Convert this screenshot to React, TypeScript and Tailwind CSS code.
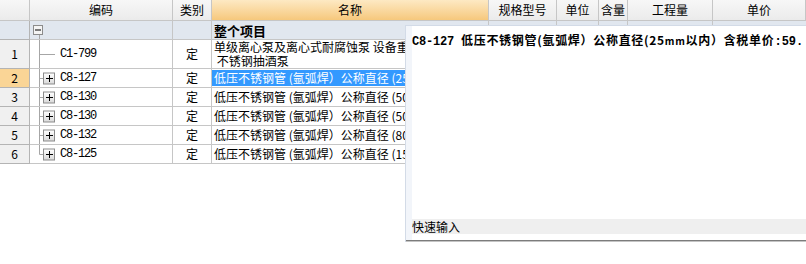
import React from 'react';

const COLS = 'grid grid-cols-[30px_143px_39px_277px_68px_42px_29px_85px_93px]';
const CJK = "font-['Noto_Sans_CJK_SC','Noto_Sans',sans-serif]";
const MONO = "font-['Liberation_Mono',monospace]";

type Row = {
  n: string;
  code: string;
  name: string[];
  h: number;
  leaf?: boolean;
  selected?: boolean;
  last?: boolean;
};

const rows: Row[] = [
  { n: '1', code: 'C1-799', name: ['单级离心泵及离心式耐腐蚀泵 设备重量(t以内) 0.5', ' 不锈钢抽酒泵'], h: 29, leaf: true },
  { n: '2', code: 'C8-127', name: ['低压不锈钢管 (氩弧焊）公称直径 (25mm以内）'], h: 19, selected: true },
  { n: '3', code: 'C8-130', name: ['低压不锈钢管 (氩弧焊）公称直径 (50mm以内）'], h: 19 },
  { n: '4', code: 'C8-130', name: ['低压不锈钢管 (氩弧焊）公称直径 (50mm以内）'], h: 19 },
  { n: '5', code: 'C8-132', name: ['低压不锈钢管 (氩弧焊）公称直径 (80mm以内）'], h: 19 },
  { n: '6', code: 'C8-125', name: ['低压不锈钢管 (氩弧焊）公称直径 (15mm以内）'], h: 19, last: true },
];

const headers = ['', '编码', '类别', '名称', '规格型号', '单位', '含量', '工程量', '单价'];

const TreeGlyph = ({ h, leaf, last }: { h: number; leaf?: boolean; last?: boolean }) => {
  const mid = Math.floor(h / 2) + 0.5;
  return (
    <svg width={30} height={h} className="shrink-0">
      <line x1={9.5} y1={0} x2={9.5} y2={last ? mid : h} stroke="#a6a6a6" />
      {leaf ? (
        <line x1={9.5} y1={mid} x2={25} y2={mid} stroke="#a6a6a6" />
      ) : (
        <>
          <defs>
            <linearGradient id="bx" x1="0" y1="0" x2="0" y2="1">
              <stop offset="0" stopColor="#ffffff" />
              <stop offset="1" stopColor="#d9d9d9" />
            </linearGradient>
          </defs>
          <line x1={9.5} y1={mid} x2={13} y2={mid} stroke="#a6a6a6" />
          <rect x={13.5} y={mid - 5.5} width={11} height={11} fill="url(#bx)" stroke="#8c8c8c" />
          <line x1={16} y1={mid} x2={23} y2={mid} stroke="#000" />
          <line x1={19.5} y1={mid - 3.5} x2={19.5} y2={mid + 3.5} stroke="#000" />
        </>
      )}
    </svg>
  );
};

const Panel = () => (
  <div className={`absolute left-[405px] top-[25px] w-[401px] h-[217px] flex flex-col bg-white border-l border-t border-[#d3dbe7] ${CJK}`}>
    <div className="flex flex-1 min-h-0">
      <div className="w-[6px] bg-[#f2f5fa]" />
      <div className="flex-1 flex flex-col min-w-0">
        <div className="pt-[7px] h-[28px] flex items-baseline whitespace-nowrap overflow-hidden text-[12px] leading-[14px] font-bold text-black">
          <span className={`${MONO} tracking-[-0.2px]`}>C8-127&nbsp;</span>
          <span className="tracking-[0.7px]">低压不锈钢管(氩弧焊）公称直径(25<span className="text-[10px]">mm</span>以内）含税单价</span>
          <span className={MONO}>:59.</span>
        </div>
        <div className="flex-1" />
        <div className="h-[15px] bg-[#efefef] text-[12px] leading-[15px] text-black">快速输入</div>
        <div className="h-[6px]" />
      </div>
    </div>
    <div className="h-px bg-[#7c7c7c]" />
    <div className="h-px bg-[#c4c4c4]" />
  </div>
);

export default function App() {
  return (
    <div className={`relative w-[806px] h-[264px] bg-white overflow-hidden text-black ${CJK}`}>
      {/* header */}
      <div className={`${COLS} h-[21px]`}>
        {headers.map((t, i) => (
          <div
            key={i}
            className={`flex items-center justify-center border-b border-r border-[#c6c6c6] text-[12px] leading-none ${
              i === 3 ? 'bg-gradient-to-b from-[#fde9c3] to-[#f6c87c]' : 'bg-gradient-to-b from-[#f7f7f7] to-[#ebebeb]'
            }`}
          >
            {t}
          </div>
        ))}
      </div>

      {/* root row */}
      <div className={`${COLS} h-[19px] bg-[#e1e7ef]`}>
        <div className="border-b border-r border-[#b4b4b4]" />
        <div className="border-b border-r border-[#c6c6c6] flex">
          <svg width={30} height={18}>
            <rect x={3.5} y={4.5} width={9} height={9} fill="#f4f4f4" stroke="#8c8c8c" />
            <line x1={5} y1={9} x2={11} y2={9} stroke="#000" />
            <line x1={9.5} y1={14} x2={9.5} y2={18} stroke="#a6a6a6" />
          </svg>
        </div>
        <div className="border-b border-r border-[#c6c6c6]" />
        <div className="border-b border-r border-[#c6c6c6] pl-[2px] flex items-center text-[13px] font-bold leading-none">整个项目</div>
        <div className="border-b border-r border-[#c6c6c6]" />
        <div className="border-b border-r border-[#c6c6c6]" />
        <div className="border-b border-r border-[#c6c6c6]" />
        <div className="border-b border-r border-[#c6c6c6]" />
        <div className="border-b border-[#c6c6c6]" />
      </div>

      {rows.map((r) => (
        <div key={r.n} className={COLS} style={{ height: r.h }}>
          <div
            className={`border-b border-r border-[#b4b4b4] flex items-center justify-center text-[12px] ${
              r.selected ? 'bg-[#fad596]' : 'bg-[#f0f0f0]'
            }`}
          >
            {r.n}
          </div>
          <div className="border-b border-r border-[#c6c6c6] flex items-center overflow-hidden">
            <TreeGlyph h={r.h - 1} leaf={r.leaf} last={r.last} />
            <span className={`${MONO} text-[12px] tracking-[-1.2px]`}>{r.code}</span>
          </div>
          <div className="border-b border-r border-[#c6c6c6] flex items-center justify-center text-[12px]">定</div>
          <div className="border-b border-r border-[#c6c6c6] overflow-hidden flex flex-col justify-center">
            {r.selected ? (
              <div className="mt-px mb-px h-[16px] bg-[#3399ff] text-white pl-[2px] whitespace-pre text-[12px] leading-[16px]">
                {r.name[0]}
              </div>
            ) : (
              r.name.map((line, i) => (
                <div key={i} className="pl-[2px] whitespace-pre text-[12px] leading-[14px]">
                  {line}
                </div>
              ))
            )}
          </div>
          <div className="border-b border-r border-[#c6c6c6]" />
          <div className="border-b border-r border-[#c6c6c6]" />
          <div className="border-b border-r border-[#c6c6c6]" />
          <div className="border-b border-r border-[#c6c6c6]" />
          <div className="border-b border-[#c6c6c6]" />
        </div>
      ))}

      <Panel />
    </div>
  );
}
